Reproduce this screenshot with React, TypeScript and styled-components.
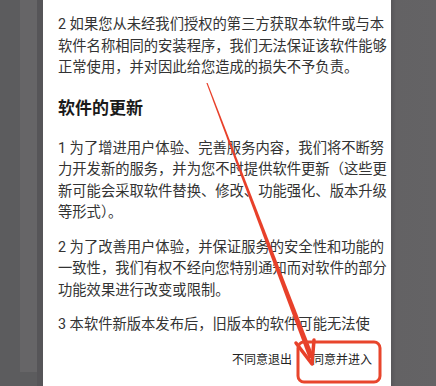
import React from "react";
import styled, { createGlobalStyle } from "styled-components";

const GlobalStyle = createGlobalStyle`
  html, body {
    margin: 0;
    padding: 0;
    background: #5e5d5f;
  }
  body {
    font-family: Roboto, "Noto Sans CJK SC", "Noto Sans", sans-serif;
  }
`;

const sections: { kind: "p" | "h"; lines: string[] }[] = [
  {
    kind: "p",
    lines: [
      "2 如果您从未经我们授权的第三方获取本软件或与本",
      "软件名称相同的安装程序，我们无法保证该软件能够",
      "正常使用，并对因此给您造成的损失不予负责。",
    ],
  },
  { kind: "h", lines: ["软件的更新"] },
  {
    kind: "p",
    lines: [
      "1 为了增进用户体验、完善服务内容，我们将不断努",
      "力开发新的服务，并为您不时提供软件更新（这些更",
      "新可能会采取软件替换、修改、功能强化、版本升级",
      "等形式）。",
    ],
  },
  {
    kind: "p",
    lines: [
      "2 为了改善用户体验，并保证服务的安全性和功能的",
      "一致性，我们有权不经向您特别通知而对软件的部分",
      "功能效果进行改变或限制。",
    ],
  },
  {
    kind: "p",
    lines: ["3 本软件新版本发布后，旧版本的软件可能无法使"],
  },
];

export default function App() {
  return (
    <>
      <GlobalStyle />
      <Page>
        <LeftGutter>
          <Stripe />
        </LeftGutter>
        <Dialog>
          <ScrollArea>
            {sections.map((s, i) =>
              s.kind === "h" ? (
                <Heading key={i}>{s.lines[0]}</Heading>
              ) : (
                <Paragraph key={i}>
                  {s.lines.map((l, j) => (
                    <Line key={j}>{l}</Line>
                  ))}
                </Paragraph>
              )
            )}
          </ScrollArea>
          <ButtonRow>
            <TextButton>不同意退出</TextButton>
            <TextButton>同意并进入</TextButton>
          </ButtonRow>
        </Dialog>
        <RightGutter />
        <Annotation viewBox="0 0 436 386" width="436" height="386">
          <polygon
            points="206.4,83 207.6,83 314,357 309,359"
            fill="#e8402a"
          />
          <polyline
            points="296,343 312,364 314,340"
            fill="none"
            stroke="#e8402a"
            strokeWidth="3.5"
            strokeLinecap="round"
            strokeLinejoin="round"
          />
          <rect
            x="298"
            y="342"
            width="82"
            height="40"
            rx="6"
            fill="none"
            stroke="#e8452c"
            strokeWidth="3"
          />
        </Annotation>
      </Page>
    </>
  );
}

const Page = styled.div`
  position: relative;
  display: flex;
  width: 436px;
  height: 386px;
  overflow: hidden;
  background: #5e5d5f;
`;

const LeftGutter = styled.div`
  width: 43px;
  flex-shrink: 0;
  display: flex;
  background: linear-gradient(
    to right,
    #5c5c5e 0,
    #5c5c5e 37px,
    #565558 37px,
    #565558 43px
  );
`;

const Stripe = styled.div`
  margin-left: 20px;
  width: 17px;
  height: 372px;
  background: #666567;
`;

const Dialog = styled.div`
  width: 348px;
  flex-shrink: 0;
  background: #ffffff;
  display: flex;
  flex-direction: column;
`;

const ScrollArea = styled.div`
  height: 339px;
  overflow: hidden;
  padding: 14px 0 0 15px;
  box-sizing: border-box;
`;

const Paragraph = styled.div`
  margin-bottom: 13px;
  font-size: 14.3px;
  line-height: 21.5px;
  color: #333333;
`;

const Line = styled.div`
  white-space: nowrap;
`;

const Heading = styled.div`
  margin: 17px 0 18px;
  font-size: 17px;
  line-height: 24px;
  font-weight: 700;
  color: #1a1a1a;
`;

const ButtonRow = styled.div`
  display: flex;
  justify-content: flex-end;
  gap: 20px;
  padding: 12px 19px 0 0;
`;

const TextButton = styled.div`
  font-size: 12px;
  line-height: 18px;
  color: #222222;
`;

const RightGutter = styled.div`
  flex: 1;
  background: linear-gradient(to right, #58575a 0, #636264 5px, #646365 100%);
`;

const Annotation = styled.svg`
  position: absolute;
  left: 0;
  top: 0;
  pointer-events: none;
`;
